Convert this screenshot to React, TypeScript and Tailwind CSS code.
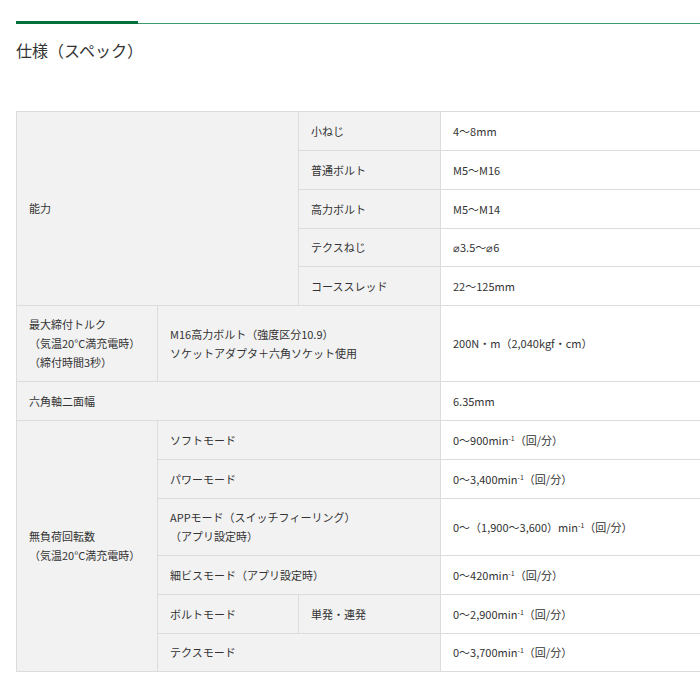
const sup = <sup className="text-[7px] relative -top-[4px]">-1</sup>;

const th = "bg-[#f2f2f2] border border-[#dcdcdc] px-3 text-left font-normal align-middle";
const td = "bg-white border border-[#dcdcdc] px-3 align-middle";

export default function App() {
  return (
    <div className="w-[700px] h-[700px] overflow-hidden bg-white text-[#333] text-[11px] leading-[19px]" style={{ fontFamily: '"Noto Sans CJK JP", "Noto Sans", sans-serif' }}>
      <div className="pt-[21px] pl-4 flex items-end">
        <div className="w-[122px] h-[3px] bg-[#00703c]" />
        <div className="flex-1 h-px bg-[#3a9a6a]" />
      </div>
      <h2 className="pl-4 pt-[14px] text-[16px] leading-6 text-[#333]">仕様（スペック）</h2>
      <div className="pl-4 pt-[49px]">
        <table className="w-[720px] border-collapse table-fixed">
          <colgroup>
            <col className="w-[141px]" />
            <col className="w-[141px]" />
            <col className="w-[142px]" />
            <col />
          </colgroup>
          <tbody>
            <tr className="h-[39px]"><th className={th} colSpan={2} rowSpan={5}>能力</th><th className={th}>小ねじ</th><td className={td}>4〜8mm</td></tr>
            <tr className="h-[39px]"><th className={th}>普通ボルト</th><td className={td}>M5〜M16</td></tr>
            <tr className="h-[39px]"><th className={th}>高力ボルト</th><td className={td}>M5〜M14</td></tr>
            <tr className="h-[38px]"><th className={th}>テクスねじ</th><td className={td}>⌀3.5〜⌀6</td></tr>
            <tr className="h-[39px]"><th className={th}>コーススレッド</th><td className={td}>22〜125mm</td></tr>
            <tr className="h-[76px]">
              <th className={th}>最大締付トルク<br />（気温20°C満充電時）<br />（締付時間3秒）</th>
              <th className={th} colSpan={2}>M16高力ボルト（強度区分10.9）<br />ソケットアダプタ＋六角ソケット使用</th>
              <td className={td}>200N・m（2,040kgf・cm）</td>
            </tr>
            <tr className="h-[39px]"><th className={th} colSpan={3}>六角軸二面幅</th><td className={td}>6.35mm</td></tr>
            <tr className="h-[39px]">
              <th className={th} rowSpan={6}>無負荷回転数<br />（気温20°C満充電時）</th>
              <th className={th} colSpan={2}>ソフトモード</th><td className={td}>0〜900min{sup}（回/分）</td>
            </tr>
            <tr className="h-[39px]"><th className={th} colSpan={2}>パワーモード</th><td className={td}>0〜3,400min{sup}（回/分）</td></tr>
            <tr className="h-[57px]"><th className={th} colSpan={2}>APPモード（スイッチフィーリング）<br />（アプリ設定時）</th><td className={td}>0〜（1,900〜3,600）min{sup}（回/分）</td></tr>
            <tr className="h-[39px]"><th className={th} colSpan={2}>細ビスモード（アプリ設定時）</th><td className={td}>0〜420min{sup}（回/分）</td></tr>
            <tr className="h-[39px]"><th className={th}>ボルトモード</th><th className={th}>単発・連発</th><td className={td}>0〜2,900min{sup}（回/分）</td></tr>
            <tr className="h-[38px]"><th className={th} colSpan={2}>テクスモード</th><td className={td}>0〜3,700min{sup}（回/分）</td></tr>
          </tbody>
        </table>
      </div>
    </div>
  );
}
